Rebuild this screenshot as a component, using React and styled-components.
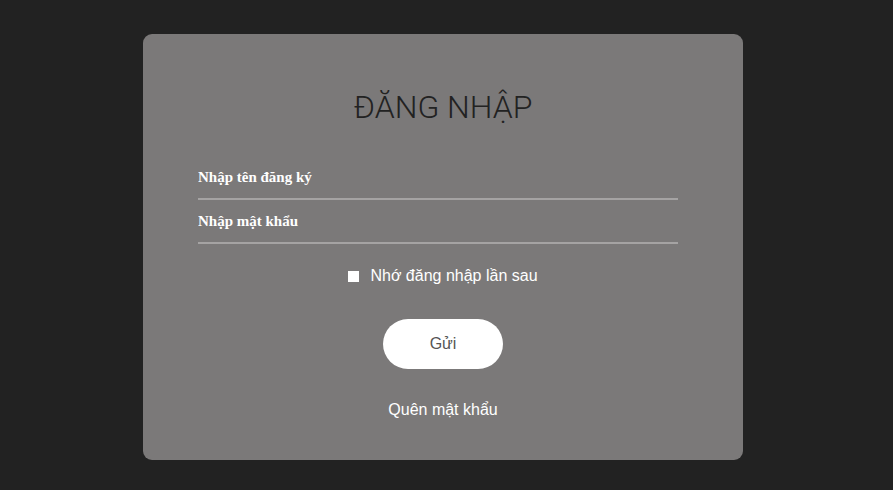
import React from "react";
import styled, { createGlobalStyle } from "styled-components";

const GlobalStyle = createGlobalStyle`
  html, body {
    margin: 0;
    padding: 0;
    background: #222222;
  }
`;

const Page = styled.div`
  width: 100%;
  height: 490px;
  padding: 34px 0 0 143px;
  box-sizing: border-box;
  display: flex;
`;

const Card = styled.form`
  width: 600px;
  height: 426px;
  box-sizing: border-box;
  background: #7b7979;
  border-radius: 9px;
  padding-top: 54px;
  display: flex;
  flex-direction: column;
  align-items: center;
`;

const Title = styled.h1`
  margin: 0;
  font-family: Roboto, "Liberation Sans", sans-serif;
  font-weight: 300;
  font-size: 32px;
  color: #222222;
  text-align: center;
`;

const Fields = styled.div`
  width: 480px;
  margin: 30px 10px 0 0;
  display: flex;
  flex-direction: column;
`;

const Input = styled.input`
  height: 44px;
  box-sizing: border-box;
  border: none;
  border-bottom: 2px solid #a5a3a3;
  background: transparent;
  outline: none;
  padding: 0;
  font-family: "Liberation Serif", serif;
  font-size: 15px;
  font-weight: bold;
  color: #ffffff;

  &::placeholder {
    color: #ffffff;
    opacity: 1;
  }
`;

const Remember = styled.label`
  margin-top: 23px;
  display: flex;
  align-items: center;
  gap: 11px;
  font-family: "Liberation Sans", Arial, sans-serif;
  font-size: 16px;
  color: #ffffff;
`;

const Box = styled.span`
  width: 11px;
  height: 11px;
  background: #ffffff;
`;

const Submit = styled.button`
  margin-top: 34px;
  width: 120px;
  height: 50px;
  border: none;
  border-radius: 25px;
  background: #ffffff;
  font-family: "Liberation Sans", Arial, sans-serif;
  font-size: 16px;
  color: #555555;
`;

const Forgot = styled.a`
  margin-top: 32px;
  font-family: "Liberation Sans", Arial, sans-serif;
  font-size: 16px;
  color: #ffffff;
  text-decoration: none;
`;

export default function App() {
  return (
    <>
      <GlobalStyle />
      <Page>
        <Card>
          <Title>ĐĂNG NHẬP</Title>
          <Fields>
            <Input placeholder="Nhập tên đăng ký" />
            <Input type="password" placeholder="Nhập mật khẩu" />
          </Fields>
          <Remember>
            <Box />
            Nhớ đăng nhập lần sau
          </Remember>
          <Submit type="button">Gửi</Submit>
          <Forgot>Quên mật khẩu</Forgot>
        </Card>
      </Page>
    </>
  );
}
